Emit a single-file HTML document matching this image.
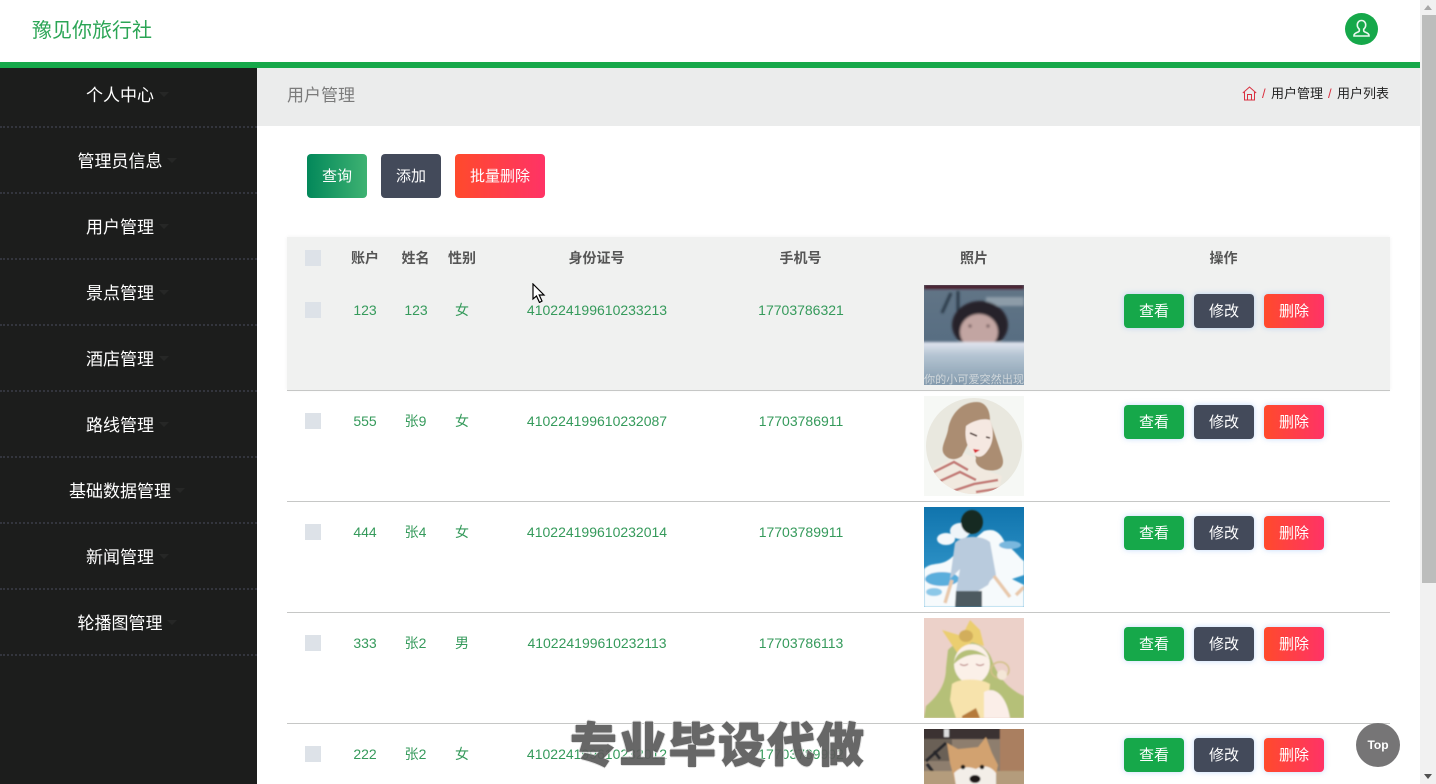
<!DOCTYPE html>
<html lang="zh-CN"><head><meta charset="utf-8"><title>豫见你旅行社</title>
<style>
*{box-sizing:border-box;margin:0;padding:0}
html,body{width:1436px;height:784px;overflow:hidden;background:#fff;font-family:"Liberation Sans","Noto Sans CJK SC",sans-serif}
.a{position:absolute}
.t{position:absolute;white-space:nowrap;text-align:center;transform:translateX(-50%);line-height:20px}
.nav{position:absolute;left:0;width:240px;height:20px;text-align:center;color:#fff;font-size:17px;line-height:20px}
.dash{position:absolute;left:0;width:257px;height:0;border-top:2px dotted #33353d}
.caret{position:absolute;width:0;height:0;border:5px solid transparent;border-top-color:#262726;border-bottom:0}
.btn{position:absolute;height:34px;width:60px;border-radius:4px;color:#fff;font-size:15px;line-height:36px;text-align:center;box-shadow:0 0 6px rgba(80,150,240,.35)}
.g{background:#16a84a}.d{background:#434a5a}.r{background:linear-gradient(90deg,#ff4a2c,#ff3366)}
.tb{position:absolute;height:44px;border-radius:4px;color:#fff;font-size:15px;line-height:46px;text-align:center}
.cb{position:absolute;left:305px;width:16px;height:16px;background:#dde2e8}
.c{font-size:14px;color:#359a5b}
.h{font-size:14px;font-weight:bold;color:#555}
.line{position:absolute;left:287px;width:1103px;height:1px;background:#c6c7c6}
svg.p{position:absolute;left:924px;width:100px;height:100px}
</style></head><body>

<div class="a" style="left:0;top:0;width:1420px;height:62px;background:#fff"></div>
<div class="a" style="left:32px;top:17px;font-size:20px;line-height:28px;color:#2ba555;white-space:nowrap">豫见你旅行社</div>
<div class="a" style="left:1345px;top:13px;width:33px;height:32px;border-radius:50%;background:#16a84a"></div>
<svg class="a" style="left:1345px;top:13px" width="33" height="32" viewBox="0 0 33 32" fill="none" stroke="#e8f8ee" stroke-width="1.6"><path d="M16.5 7.5c-2.6 0-4.2 2-4.2 4.400 0 1.800.8 3.300 2 4.200v1.500c0 .8-.7 1.200-1.700 1.600-1.700.7-3.600 1.400-3.600 3.300v.5h15v-.5c0-1.900-1.900-2.600-3.600-3.300-1-.4-1.700-.8-1.700-1.600v-1.500c1.200-.9 2-2.400 2-4.200 0-2.400-1.600-4.400-4.200-4.400z"/></svg>
<div class="a" style="left:0;top:62px;width:1420px;height:6px;background:#16a84a"></div>

<div class="a" style="left:0;top:68px;width:257px;height:716px;background:#1c1d1c"></div>
<div class="nav" style="top:86px">个人中心</div><div class="caret" style="left:159px;top:92px"></div><div class="dash" style="top:126px"></div>
<div class="nav" style="top:152px">管理员信息</div><div class="caret" style="left:167px;top:158px"></div><div class="dash" style="top:192px"></div>
<div class="nav" style="top:218px">用户管理</div><div class="caret" style="left:159px;top:224px"></div><div class="dash" style="top:258px"></div>
<div class="nav" style="top:284px">景点管理</div><div class="caret" style="left:159px;top:290px"></div><div class="dash" style="top:324px"></div>
<div class="nav" style="top:350px">酒店管理</div><div class="caret" style="left:159px;top:356px"></div><div class="dash" style="top:390px"></div>
<div class="nav" style="top:416px">路线管理</div><div class="caret" style="left:159px;top:422px"></div><div class="dash" style="top:456px"></div>
<div class="nav" style="top:482px">基础数据管理</div><div class="caret" style="left:175px;top:488px"></div><div class="dash" style="top:522px"></div>
<div class="nav" style="top:548px">新闻管理</div><div class="caret" style="left:159px;top:554px"></div><div class="dash" style="top:588px"></div>
<div class="nav" style="top:614px">轮播图管理</div><div class="caret" style="left:167px;top:620px"></div><div class="dash" style="top:654px"></div>

<div class="a" style="left:257px;top:68px;width:1163px;height:58px;background:#ebecec"></div>
<div class="a" style="left:287px;top:86px;font-size:17px;line-height:20px;color:#7b7b7b;white-space:nowrap">用户管理</div>
<svg class="a" style="left:1242px;top:86px" width="15" height="15" viewBox="0 0 15 15" fill="none" stroke="#d9303f" stroke-width="1"><path d="M.8 7 7.500 1l6.700 6M2.500 6v8h10V6M5.500 14V8.500h4V14"/></svg>
<div class="a" style="left:1262px;top:84px;font-size:13px;line-height:20px;color:#d9303f">/</div>
<div class="a" style="left:1271px;top:84px;font-size:13px;line-height:20px;color:#222;white-space:nowrap">用户管理</div>
<div class="a" style="left:1328px;top:84px;font-size:13px;line-height:20px;color:#d9303f">/</div>
<div class="a" style="left:1337px;top:84px;font-size:13px;line-height:20px;color:#222;white-space:nowrap">用户列表</div>

<div class="tb" style="left:307px;top:154px;width:60px;background:linear-gradient(90deg,#03885a,#3eb272)">查询</div>
<div class="tb" style="left:381px;top:154px;width:60px;background:#434a5a">添加</div>
<div class="tb" style="left:455px;top:154px;width:90px;background:linear-gradient(90deg,#ff4a2c,#ff3366)">批量删除</div>

<div class="a" style="left:287px;top:237px;width:1103px;height:153px;background:#f0f1f0;box-shadow:0 0 4px rgba(0,0,0,.06)"></div>
<div class="line" style="top:390px"></div><div class="line" style="top:501px"></div><div class="line" style="top:612px"></div><div class="line" style="top:723px"></div>

<div class="cb" style="top:250px"></div>
<div class="t h" style="left:365px;top:248px">账户</div>
<div class="t h" style="left:415.500px;top:248px">姓名</div>
<div class="t h" style="left:462px;top:248px">性别</div>
<div class="t h" style="left:596.500px;top:248px">身份证号</div>
<div class="t h" style="left:800.500px;top:248px">手机号</div>
<div class="t h" style="left:974px;top:248px">照片</div>
<div class="t h" style="left:1223.500px;top:248px">操作</div>

<div class="cb" style="top:302px"></div>
<div class="t c" style="left:365px;top:300px">123</div><div class="t c" style="left:416px;top:300px">123</div><div class="t c" style="left:462px;top:300px">女</div><div class="t c" style="left:597px;top:300px">410224199610233213</div><div class="t c" style="left:801px;top:300px">17703786321</div>
<div class="btn g" style="left:1124px;top:294px">查看</div><div class="btn d" style="left:1194px;top:294px">修改</div><div class="btn r" style="left:1264px;top:294px">删除</div>

<div class="cb" style="top:413px"></div>
<div class="t c" style="left:365px;top:411px">555</div><div class="t c" style="left:415.500px;top:411px">张9</div><div class="t c" style="left:462px;top:411px">女</div><div class="t c" style="left:597px;top:411px">410224199610232087</div><div class="t c" style="left:801px;top:411px">17703786911</div>
<div class="btn g" style="left:1124px;top:405px">查看</div><div class="btn d" style="left:1194px;top:405px">修改</div><div class="btn r" style="left:1264px;top:405px">删除</div>

<div class="cb" style="top:524px"></div>
<div class="t c" style="left:365px;top:522px">444</div><div class="t c" style="left:415.500px;top:522px">张4</div><div class="t c" style="left:462px;top:522px">女</div><div class="t c" style="left:597px;top:522px">410224199610232014</div><div class="t c" style="left:801px;top:522px">17703789911</div>
<div class="btn g" style="left:1124px;top:516px">查看</div><div class="btn d" style="left:1194px;top:516px">修改</div><div class="btn r" style="left:1264px;top:516px">删除</div>

<div class="cb" style="top:635px"></div>
<div class="t c" style="left:365px;top:633px">333</div><div class="t c" style="left:415.500px;top:633px">张2</div><div class="t c" style="left:462px;top:633px">男</div><div class="t c" style="left:597px;top:633px">410224199610232113</div><div class="t c" style="left:801px;top:633px">17703786113</div>
<div class="btn g" style="left:1124px;top:627px">查看</div><div class="btn d" style="left:1194px;top:627px">修改</div><div class="btn r" style="left:1264px;top:627px">删除</div>

<div class="cb" style="top:746px"></div>
<div class="t c" style="left:365px;top:744px">222</div><div class="t c" style="left:415.500px;top:744px">张2</div><div class="t c" style="left:462px;top:744px">女</div><div class="t c" style="left:597px;top:744px">410224199610232012</div><div class="t c" style="left:801px;top:744px">17703789992</div>
<div class="btn g" style="left:1124px;top:738px">查看</div><div class="btn d" style="left:1194px;top:738px">修改</div><div class="btn r" style="left:1264px;top:738px">删除</div>

<svg class="p" style="top:285px" viewBox="0 0 100 100">
<defs><filter id="b1" x="-10%" y="-10%" width="120%" height="120%"><feGaussianBlur stdDeviation="1.300"/></filter>
<linearGradient id="g1" x1="0" y1="0" x2="0" y2="1"><stop offset="0" stop-color="#627586"/><stop offset="1" stop-color="#4f687f"/></linearGradient>
<linearGradient id="g2" x1="0" y1="0" x2="0" y2="1"><stop offset="0" stop-color="#e3e6f0"/><stop offset=".28" stop-color="#b4c4d2"/><stop offset="1" stop-color="#7d95a8"/></linearGradient>
<clipPath id="c1"><rect width="100" height="100"/></clipPath></defs>
<g clip-path="url(#c1)"><rect width="100" height="100" fill="url(#g1)"/>
<g filter="url(#b1)">
<rect width="100" height="4" fill="#4a1a2c"/>
<path d="M18 28 27 8M34 26V6" stroke="#2c3a48" stroke-width="3"/>
<rect x="62" y="12" width="38" height="9" fill="#8d9ca8"/>
<ellipse cx="56" cy="40" rx="28" ry="24" fill="#27222c"/>
<ellipse cx="55" cy="47" rx="19" ry="18" fill="#c2a5a2"/>
<path d="M36 40C42 26 66 24 76 38L72 22 52 18 38 26z" fill="#27222c"/>
<circle cx="46" cy="41" r="1.500" fill="#5a4246"/><circle cx="64" cy="41" r="1.500" fill="#5a4246"/>
<rect x="-4" y="57" width="108" height="47" fill="url(#g2)"/>
</g></g>
<text x="50" y="98" font-size="11" text-anchor="middle" fill="#cfd6da" textLength="100" lengthAdjust="spacingAndGlyphs" font-family="'Noto Sans CJK SC',sans-serif">你的小可爱突然出现</text>
</svg>

<svg class="p" style="top:396px" viewBox="0 0 100 100">
<defs><filter id="b2"><feGaussianBlur stdDeviation=".6"/></filter><clipPath id="cp2"><circle cx="50" cy="50" r="48"/></clipPath></defs>
<rect width="100" height="100" fill="#f6f8f5"/>
<circle cx="50" cy="50" r="48" fill="#e9e8df"/>
<g clip-path="url(#cp2)" filter="url(#b2)">
<path d="M36 56 52 62 56 72 78 80 74 100H14L6 74 22 66z" fill="#f1e9df"/>
<path d="M10 76 30 66 44 74M14 86 36 76 52 84M26 96 50 88 74 84M52 96 78 92" stroke="#c47d78" stroke-width="2.600" fill="none"/>
<path d="M53 6C36 6 26 20 24 34 22 44 16 52 20 58 24 64 32 65 38 60L44 48 66 24C70 36 74 48 78 60 82 72 74 76 62 74 56 72 50 68 52 62L48 50C60 40 66 30 66 24 66 12 60 6 53 6z" fill="#ab8d72"/>
<path d="M42 30C50 24 60 22 66 24 70 34 70 46 64 54 60 60 56 62 52 60 44 54 40 44 42 30z" fill="#f5e8e1"/>
<path d="M46 37l7 3M62 41l4 1" stroke="#4a3630" stroke-width="1.500"/>
<path d="M49 53l7 1-5 3z" fill="#d8252f"/>
</g></svg>

<svg class="p" style="top:507px" viewBox="0 0 100 100">
<defs><filter id="b3" x="-10%" y="-10%" width="120%" height="120%"><feGaussianBlur stdDeviation=".8"/></filter><linearGradient id="g3" x1="0" y1="0" x2="0" y2="1"><stop offset="0" stop-color="#1074ad"/><stop offset="1" stop-color="#3ea2d4"/></linearGradient><clipPath id="c3"><rect width="100" height="100"/></clipPath></defs>
<g clip-path="url(#c3)"><rect width="100" height="100" fill="url(#g3)"/>
<g filter="url(#b3)">
<ellipse cx="22" cy="32" rx="9" ry="6" fill="#f4f8fb"/>
<ellipse cx="36" cy="24" rx="10" ry="8" fill="#eef4f8"/>
<path d="M0 62C8 54 18 60 28 50L60 24C72 20 78 28 82 38 92 44 96 52 100 54V68L88 72 100 78V100H0z" fill="#f6fafc"/>
<ellipse cx="86" cy="38" rx="11" ry="4" fill="#7ab8de"/>
<ellipse cx="18" cy="72" rx="17" ry="7" fill="#5aaedc"/>
<ellipse cx="10" cy="85" rx="8" ry="4" fill="#8cc8e8"/>
<path d="M31 36C38 28 58 28 66 35L72 68 66 74 64 78 44 90 32 84 36 62 26 72z" fill="#b9cbdd"/>
<path d="M32 84 58 84V100H31z" fill="#4e5a60"/>
<ellipse cx="48" cy="15" rx="11" ry="12" fill="#142a22"/>
<path d="M70 69 86 90M92 88 100 80M28 73 21 96" stroke="#e8c8aa" stroke-width="3.500" fill="none"/>
</g></g></svg>

<svg class="p" style="top:618px" viewBox="0 0 100 100">
<defs><filter id="b4" x="-10%" y="-10%" width="120%" height="120%"><feGaussianBlur stdDeviation=".7"/></filter><clipPath id="c4"><rect width="100" height="100"/></clipPath></defs>
<g clip-path="url(#c4)"><rect width="100" height="100" fill="#ecd1c9"/>
<g filter="url(#b4)">
<path d="M24 32C36 18 62 22 68 42 74 60 86 72 100 78V100H0L2 88C14 78 22 66 22 50z" fill="#b5c078"/>
<path d="M18 12 38 18 46 2 56 12 60 28 48 24 34 36z" fill="#ebce70"/>
<ellipse cx="42" cy="18" rx="7" ry="6" fill="#d2ae5c"/>
<ellipse cx="48" cy="46" rx="18" ry="20" fill="#fbf0e8"/>
<path d="M30 46C32 30 52 26 66 42 60 34 42 34 30 46z" fill="#b5c078"/>
<path d="M28 66C36 60 56 60 66 66L62 100H32L26 82z" fill="#f7e3ac"/>
<path d="M60 74C70 68 82 76 86 100H60z" fill="#fbeee8"/>
<path d="M36 46q4 3 8 0M52 46q4 3 8 0" stroke="#a66" stroke-width="1" fill="none"/>
<ellipse cx="76" cy="52" rx="9" ry="8" fill="none" stroke="#d2c088" stroke-width="1.500"/>
<circle cx="78" cy="57" r="5" fill="#f4e6d6"/>
<path d="M38 98 52 90 56 100H38z" fill="#b57a3a"/>
</g></g></svg>

<svg class="p" style="top:729px;height:55px" viewBox="0 0 100 55">
<defs><filter id="b5" x="-10%" y="-10%" width="120%" height="120%"><feGaussianBlur stdDeviation=".8"/></filter><clipPath id="c5"><rect width="100" height="55"/></clipPath></defs>
<g clip-path="url(#c5)"><rect width="100" height="55" fill="#8e7e6e"/>
<g filter="url(#b5)">
<rect x="-2" y="-2" width="80" height="12" fill="#3a3230"/>
<rect x="20" y="0" width="5" height="8" fill="#ddd"/>
<rect x="76" y="-2" width="26" height="44" fill="#aa7f60"/>
<path d="M-2 10H28V32H-2z" fill="#6a6056"/>
<path d="M2 32 22 14M10 22l6 8M3 35l6 8" stroke="#25262a" stroke-width="3"/>
<path d="M-2 42H102V57H-2z" fill="#b49c7c"/>
<path d="M23 14 34 20 54 18 62 8 68 24 74 36 70 57H32L26 34z" fill="#d2a26f"/>
<path d="M30 44C38 36 46 38 52 40 58 36 66 36 72 44V57H32z" fill="#f3eee8"/>
<ellipse cx="51" cy="50" rx="5.500" ry="4" fill="#1a1616"/>
<circle cx="39" cy="38" r="2.300" fill="#221a16"/><circle cx="58" cy="38" r="2.300" fill="#221a16"/>
</g></g></svg>

<div class="a" style="left:570px;top:712px;height:60px;font-size:47px;line-height:60px;font-weight:900;color:#5c5c5c;white-space:nowrap;font-family:'Noto Sans CJK SC',sans-serif;-webkit-text-stroke:1px #5c5c5c;text-shadow:-1.500px 0 #ddd,1.500px 0 #ddd,0 -1.500px #ddd,0 1.500px #ddd;letter-spacing:2.400px;opacity:.93">专业毕设代做</div>

<div class="a" style="left:1356px;top:723px;width:44px;height:44px;border-radius:50%;background:#767576;color:#fff;font-size:12px;font-weight:bold;line-height:44px;text-align:center">Top</div>

<svg class="a" style="left:532px;top:283px" width="14" height="20" viewBox="0 0 14 20"><path d="M1 1V16L4.500 13 7.500 19.500 10 18 7.200 12H12z" fill="#fff" stroke="#000" stroke-width="1.200"/></svg>

<div class="a" style="left:1420px;top:0;width:16px;height:784px;background:#f1f1f1"></div>
<div class="a" style="left:1422px;top:15px;width:14px;height:568px;background:#bcbdbc"></div>
<div class="a" style="left:1424px;top:5px;width:0;height:0;border:4px solid transparent;border-bottom:5px solid #a8a8a8;border-top:0"></div>
<div class="a" style="left:1424px;top:774px;width:0;height:0;border:4px solid transparent;border-top:5px solid #505050;border-bottom:0"></div>
</body></html>
